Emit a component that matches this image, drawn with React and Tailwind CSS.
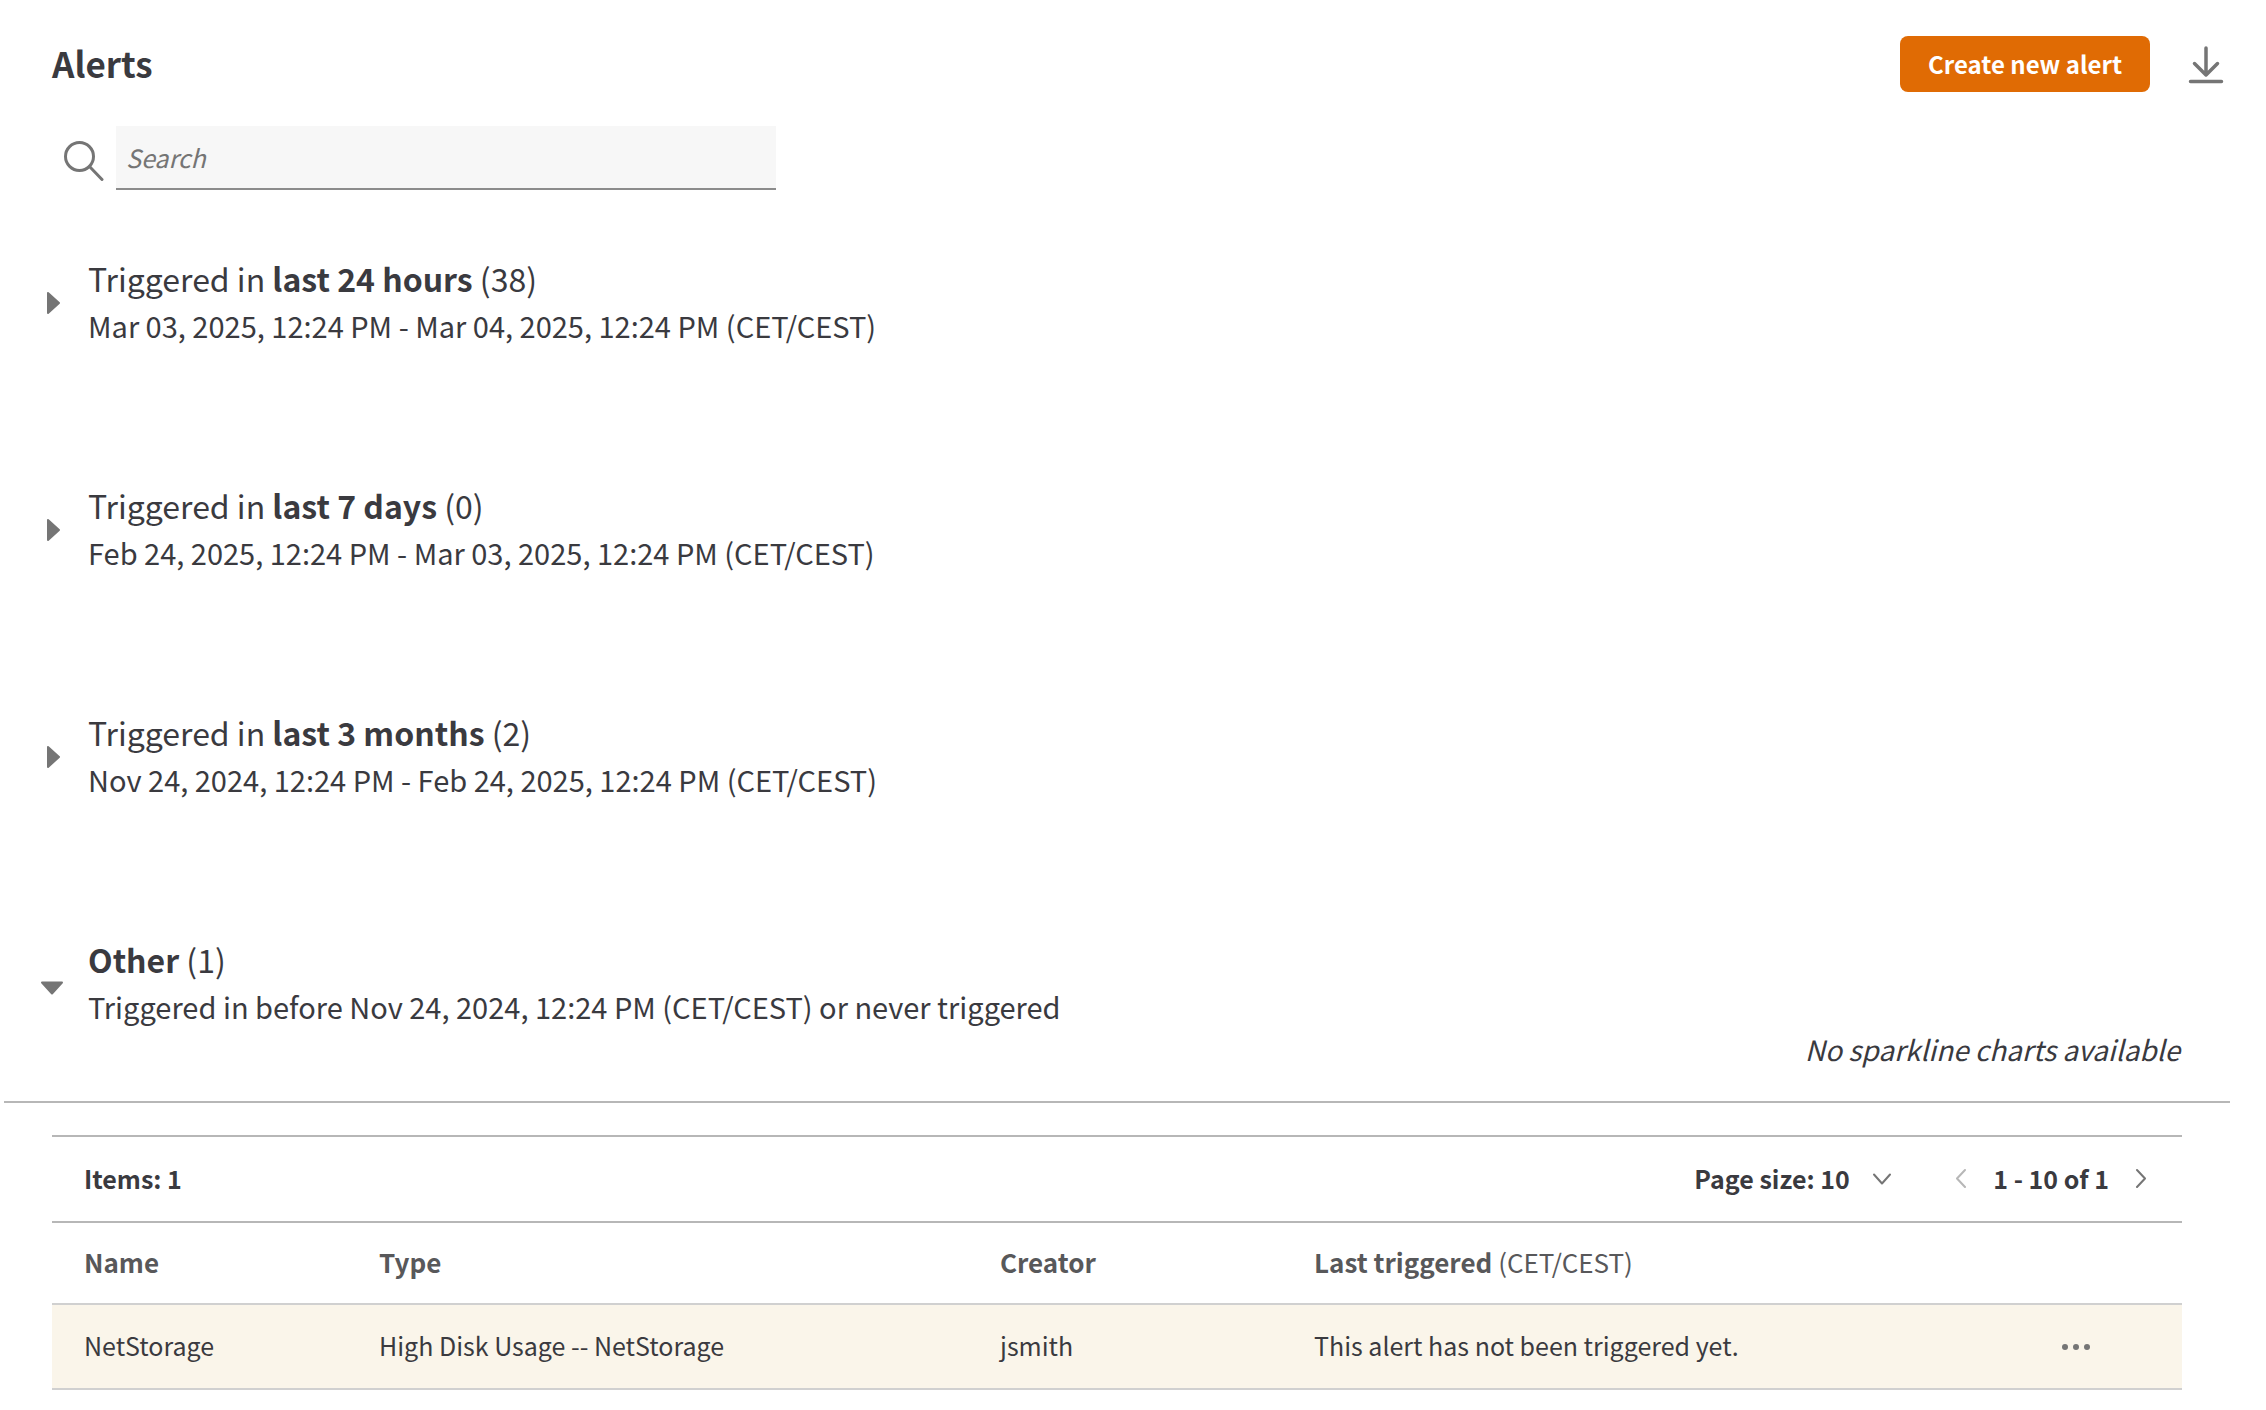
import { useState } from "react";

const groups = [
  {
    id: "day",
    prefix: "Triggered in ",
    label: "last 24 hours",
    count: 38,
    range: "Mar 03, 2025, 12:24 PM - Mar 04, 2025, 12:24 PM (CET/CEST)",
  },
  {
    id: "week",
    prefix: "Triggered in ",
    label: "last 7 days",
    count: 0,
    range: "Feb 24, 2025, 12:24 PM - Mar 03, 2025, 12:24 PM (CET/CEST)",
  },
  {
    id: "months",
    prefix: "Triggered in ",
    label: "last 3 months",
    count: 2,
    range: "Nov 24, 2024, 12:24 PM - Feb 24, 2025, 12:24 PM (CET/CEST)",
  },
  {
    id: "other",
    prefix: "",
    label: "Other",
    count: 1,
    range:
      "Triggered in before Nov 24, 2024, 12:24 PM (CET/CEST) or never triggered",
  },
];

const alerts = [
  {
    name: "NetStorage",
    type: "High Disk Usage -- NetStorage",
    creator: "jsmith",
    lastTriggered: "This alert has not been triggered yet.",
  },
];

function SearchIcon() {
  return (
    <svg
      viewBox="0 0 40 40"
      className="size-10"
      fill="none"
      stroke="#757575"
      strokeWidth="3"
      strokeLinecap="round"
      aria-hidden="true"
    >
      <circle cx="15.5" cy="15.5" r="14" />
      <path d="M25.5 25.5 38 38.500" />
    </svg>
  );
}

function DownloadIcon() {
  return (
    <svg
      viewBox="0 0 36 40"
      className="h-10 w-9"
      fill="none"
      stroke="#757575"
      strokeWidth="3.5"
      strokeLinecap="round"
      strokeLinejoin="round"
      aria-hidden="true"
    >
      <path d="M18 4v27M6.500 19.500 18 31l11.500-11.500M2.500 37.500h31" />
    </svg>
  );
}

function Caret({ open }) {
  return (
    <svg
      viewBox="0 0 24 24"
      className="size-6 shrink-0"
      fill="#757575"
      stroke="#757575"
      strokeWidth="2"
      strokeLinejoin="round"
      aria-hidden="true"
    >
      {open ? <path d="M2 11.500h20L12 22.500z" /> : <path d="M8 3v20l11-10z" />}
    </svg>
  );
}

function Chevron({ d, color = "#757575" }) {
  return (
    <svg
      viewBox="0 0 20 20"
      className="size-5"
      fill="none"
      stroke={color}
      strokeWidth="2"
      strokeLinecap="round"
      strokeLinejoin="round"
      aria-hidden="true"
    >
      <path d={d} />
    </svg>
  );
}

function GroupHeader({ group, open, onToggle }) {
  return (
    <button
      type="button"
      aria-expanded={open}
      onClick={onToggle}
      className="flex items-center gap-6 pl-10 text-left"
    >
      <Caret open={open} />
      <span className="block">
        <span className="block text-[32px] leading-[46px]">
          {group.prefix}
          <b>{group.label}</b> ({group.count})
        </span>
        <span className="block text-[29px] leading-12">{group.range}</span>
      </span>
    </button>
  );
}

function AlertsTable() {
  return (
    <div className="mt-8 mr-[84px] ml-[52px] border-t-2 border-[#b7b7b7] text-[25px] leading-9">
      <div className="flex h-[86px] items-center justify-between border-b-2 border-[#b7b7b7] pr-[31px] pb-0.5 pl-8 font-bold">
        <span>Items: 1</span>
        <div className="flex items-center">
          <label htmlFor="pageSize">Page size:&nbsp;</label>
          <div className="grid items-center">
            <select
              id="pageSize"
              defaultValue="10"
              className="col-start-1 row-start-1 w-[72px] appearance-none bg-transparent"
            >
              <option value="10">10</option>
              <option value="25">25</option>
              <option value="50">50</option>
            </select>
            <span className="pointer-events-none col-start-1 row-start-1 justify-self-end">
              <Chevron d="m2 6.500 8 9 8-9" />
            </span>
          </div>
          <button
            type="button"
            aria-label="Previous page"
            disabled
            className="ml-[59px]"
          >
            <Chevron d="m14 2-8 8.500 8 8.500" color="#b7b7b7" />
          </button>
          <span className="mx-[22px]">1 - 10 of 1</span>
          <button type="button" aria-label="Next page">
            <Chevron d="m6 2 8 8.500-8 8.500" />
          </button>
        </div>
      </div>
      <table className="w-full table-fixed text-left">
        <thead>
          <tr className="h-[81px] border-b-2 border-[#d0d0d0] text-[26px] text-[#58585a]">
            <th className="w-[327px] pb-0.5 pl-8 font-bold">Name</th>
            <th className="w-[621px] pb-0.5 font-bold">Type</th>
            <th className="w-[314px] pb-0.5 font-bold">Creator</th>
            <th className="pb-0.5 font-bold">
              Last triggered <span className="font-normal">(CET/CEST)</span>
            </th>
            <th className="w-[122px]" aria-label="Actions" />
          </tr>
        </thead>
        <tbody>
          {alerts.map((alert) => (
            <tr
              key={alert.name}
              className="h-[85px] border-b-2 border-[#d0d0d0] bg-[#faf5ea]"
            >
              <td className="pb-1 pl-8">{alert.name}</td>
              <td className="pb-1">{alert.type}</td>
              <td className="pb-1">{alert.creator}</td>
              <td className="pb-1">{alert.lastTriggered}</td>
              <td>
                <button type="button" aria-label="More actions" className="block">
                  <svg
                    viewBox="0 0 30 6"
                    className="h-[6px] w-[30px]"
                    fill="#757575"
                    aria-hidden="true"
                  >
                    <circle cx="5" cy="3" r="3" />
                    <circle cx="16" cy="3" r="3" />
                    <circle cx="27" cy="3" r="3" />
                  </svg>
                </button>
              </td>
            </tr>
          ))}
        </tbody>
      </table>
    </div>
  );
}

function App() {
  const [openGroups, setOpenGroups] = useState({ other: true });

  function toggle(id) {
    setOpenGroups((current) => ({ ...current, [id]: !current[id] }));
  }

  return (
    <main className="bg-white pt-9 pb-5 font-['Noto_Sans_CJK_SC',sans-serif] text-[#3a3a3f]">
      <header className="flex h-14 items-center justify-between pr-[42px] pl-[52px]">
        <h1 className="pb-0.5 text-[35px] leading-12 font-bold">Alerts</h1>
        <div className="flex items-center gap-[38px]">
          <button
            type="button"
            className="h-14 rounded-lg bg-[#e06b04] px-7 text-[24px] leading-9 font-bold text-white"
          >
            Create new alert
          </button>
          <button type="button" aria-label="Download">
            <DownloadIcon />
          </button>
        </div>
      </header>

      <div className="mt-[34px] flex items-center gap-3 pl-16">
        <label htmlFor="search" aria-label="Search" className="pt-1.5">
          <SearchIcon />
        </label>
        <input
          id="search"
          type="text"
          placeholder="Search"
          className="h-16 w-[660px] border-b-2 border-[#8c8c8c] bg-[#f7f7f7] px-[10px] text-[25px] leading-9 placeholder:text-[#757575] placeholder:italic"
        />
      </div>

      <div className="mt-[65px] flex flex-col gap-[133px]">
        {groups.map((group) => (
          <section key={group.id}>
            <GroupHeader
              group={group}
              open={Boolean(openGroups[group.id])}
              onToggle={() => toggle(group.id)}
            />
            {group.id === "other" && openGroups.other && (
              <>
                <p className="mr-9 ml-1 border-b-2 border-[#b7b7b7] pr-[50px] pb-[33px] text-right text-[28px] leading-[38px] italic">
                  No sparkline charts available
                </p>
                <AlertsTable />
              </>
            )}
          </section>
        ))}
      </div>
    </main>
  );
}

export default App;
